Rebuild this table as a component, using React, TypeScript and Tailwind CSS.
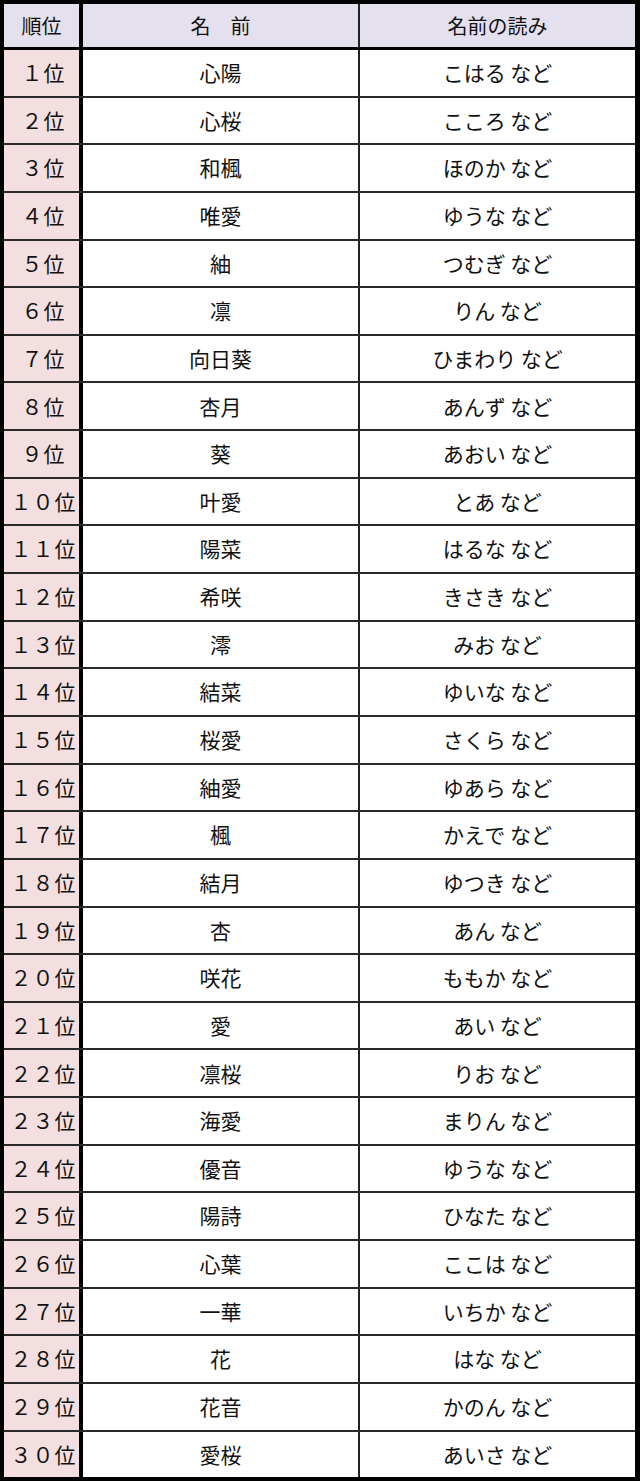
const rows: [string, string][] = [
  ['心陽', 'こはる'],
  ['心桜', 'こころ'],
  ['和楓', 'ほのか'],
  ['唯愛', 'ゆうな'],
  ['紬', 'つむぎ'],
  ['凛', 'りん'],
  ['向日葵', 'ひまわり'],
  ['杏月', 'あんず'],
  ['葵', 'あおい'],
  ['叶愛', 'とあ'],
  ['陽菜', 'はるな'],
  ['希咲', 'きさき'],
  ['澪', 'みお'],
  ['結菜', 'ゆいな'],
  ['桜愛', 'さくら'],
  ['紬愛', 'ゆあら'],
  ['楓', 'かえで'],
  ['結月', 'ゆつき'],
  ['杏', 'あん'],
  ['咲花', 'ももか'],
  ['愛', 'あい'],
  ['凛桜', 'りお'],
  ['海愛', 'まりん'],
  ['優音', 'ゆうな'],
  ['陽詩', 'ひなた'],
  ['心葉', 'ここは'],
  ['一華', 'いちか'],
  ['花', 'はな'],
  ['花音', 'かのん'],
  ['愛桜', 'あいさ'],
];

const toFullWidth = (n: number) =>
  String(n).replace(/[0-9]/g, (d) => String.fromCharCode(d.charCodeAt(0) + 0xfee0));

export default function App() {
  return (
    <div className="w-[640px] h-[1482px] bg-white font-['Noto_Sans_CJK_JP',sans-serif] text-[20px] text-[#111]">
      <div className="flex flex-col border-t-4 border-l-4 border-b-4 border-r-[5px] border-black">
        {/* Header */}
        <div className="flex h-[46px] border-b-[3px] border-black bg-[#e4e0ee]">
          <div className="w-[79px] flex items-center justify-center border-r-4 border-black">順位</div>
          <div className="w-[277px] flex items-center justify-center border-r-2 border-[#222]">名　前</div>
          <div className="flex-1 flex items-center justify-center">名前の読み</div>
        </div>

        {/* Rows */}
        {rows.map(([name, reading], i) => (
          <div
            key={i}
            className={`flex ${
              i === rows.length - 1 ? 'h-[45.65px]' : 'h-[47.65px] border-b-2 border-[#2a2a2a]'
            }`}
          >
            <div className="w-[79px] flex items-center justify-center border-r-4 border-black bg-[#f3dfdf] text-[21px] tracking-[1px] pl-[4px]">
              {toFullWidth(i + 1)}位
            </div>
            <div className="w-[277px] flex items-center justify-center border-r-2 border-[#222] bg-white text-[21px]">
              {name}
            </div>
            <div className="flex-1 flex items-center justify-center bg-white text-[21px]">{reading} など</div>
          </div>
        ))}
      </div>
    </div>
  );
}
